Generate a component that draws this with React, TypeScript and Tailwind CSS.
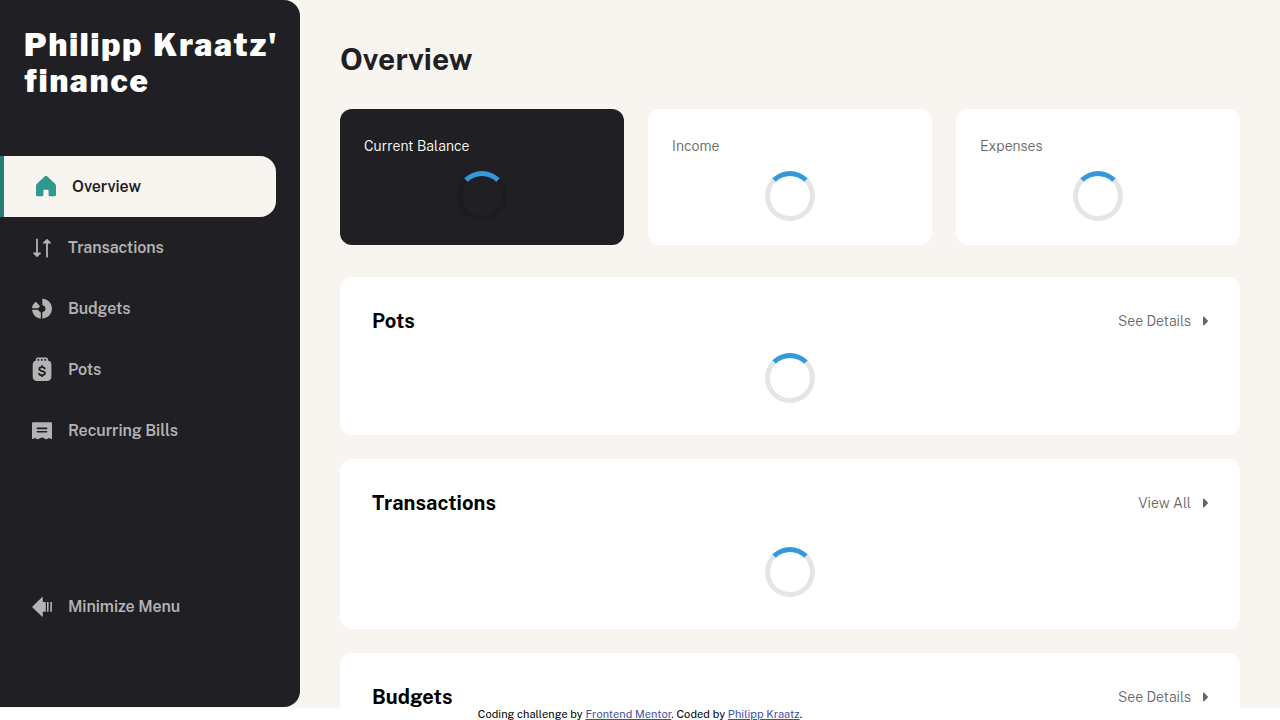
import type { ReactNode } from "react";

function Icon({ children, className }: { children: ReactNode; className?: string }) {
  return (
    <svg viewBox="0 0 24 26" className={`h-[26px] w-6 shrink-0 fill-current ${className ?? ""}`}>
      {children}
    </svg>
  );
}

const icons = {
  overview: (
    <path d="M22 11.9v8.8a1.5 1.5 0 0 1-1.5 1.5H16.1a1.5 1.5 0 0 1-1.5-1.5v-4.1a.75.75 0 0 0-.75-.75h-3.7a.75.75 0 0 0-.75.75v4.1a1.5 1.5 0 0 1-1.5 1.5H3.5A1.5 1.5 0 0 1 2 20.7v-8.8c0-.9.3-1.6 1-2.2l7.6-7.3a2 2 0 0 1 2.8 0l7.6 7.3c.7.6 1 1.3 1 2.2Z" />
  ),
  transactions: (
    <path d="M10.9 18.6 7.6 21.7a.75.75 0 0 1-1.1 0l-3.3-3.1A.75.75 0 0 1 3.7 17.4h2.4V4.3a.9.9 0 0 1 1.8 0v13.1h2.5a.75.75 0 0 1 .5 1.2ZM20.8 7.4l-3.3-3.1a.75.75 0 0 0-1.1 0l-3.3 3.1a.75.75 0 0 0 .5 1.2h2.5v13.1a.9.9 0 0 0 1.8 0V8.6h2.4a.75.75 0 0 0 .5-1.2Z" />
  ),
  budgets: (
    <>
      <path d="M12.3 3.5v5a.8.8 0 0 0 .6.8 3.5 3.5 0 0 1 0 6.8.8.8 0 0 0-.6.8v5a.75.75 0 0 0 .9.7 9.95 9.95 0 0 0 8.8-9.9 9.95 9.95 0 0 0-8.8-9.9.75.75 0 0 0-.9.7Z" />
      <path d="M10.8 16.9v5a.75.75 0 0 1-.9.7A10 10 0 0 1 2.1 14.6a.75.75 0 0 1 .7-.9h4.9a.8.8 0 0 1 .8.6 3.5 3.5 0 0 0 1.7 1.8.8.8 0 0 1 .6.8ZM2.1 11.3a10 10 0 0 1 3-5.1.9.9 0 0 1 1.3 0l3.2 3.5a.75.75 0 0 1 0 1 3.6 3.6 0 0 0-.9 1 .8.8 0 0 1-.7.5H2.8a.75.75 0 0 1-.7-.9Z" />
    </>
  ),
  pots: (
    <>
      <path
        fillRule="evenodd"
        d="M7.5.4h8.8A1.7 1.7 0 0 1 17.9 2v1.6a4.2 4.2 0 0 1 3.5 4.1v12.2a4.2 4.2 0 0 1-4.2 4.2H6.9a4.2 4.2 0 0 1-4.2-4.2V7.7a4.2 4.2 0 0 1 3.2-4.1V2A1.7 1.7 0 0 1 7.5.4Zm.1 1.6v1.7h1.6V2Zm3.4 0v1.7h1.6V2Zm3.4 0v1.7H16V2Z"
      />
      <path
        d="M12 8.3v1.6m0 8.6v1.6M15 12.2c-.3-1.4-1.4-2.1-3-2.1-1.6 0-2.7.7-2.7 1.9 0 2.8 5.7 1.3 5.7 4.1 0 1.3-1.1 2.1-3 2.1-1.8 0-2.9-.8-3.1-2.1"
        className="fill-none stroke-[#201f24] stroke-[1.8]"
      />
    </>
  ),
  bills: (
    <path
      fillRule="evenodd"
      d="M3 4.3h18a1 1 0 0 1 1 1v15.2a.5.5 0 0 1-.8.5L19 19.9l-2.4 1.3a.8.8 0 0 1-.7 0L13.6 20a3 3 0 0 0-3.2 0l-2.3 1.2a.8.8 0 0 1-.7 0L5 19.9 2.8 21a.5.5 0 0 1-.8-.5V5.3a1 1 0 0 1 1-1ZM7.4 9.6a.8.8 0 0 0 0 1.6h9.2a.8.8 0 0 0 0-1.6Zm0 3.4a.8.8 0 0 0 0 1.6h9.2a.8.8 0 0 0 0-1.6Z"
    />
  ),
  minimize: (
    <path d="M12.8 3.6v4.4h3v9.8h-3V22.1a.5.5 0 0 1-.9.4L2.5 13.4a.7.7 0 0 1 0-1l9.4-9.2a.5.5 0 0 1 .9.4Zm4.2 4.4h1.6v9.8H17Zm3.3 0h1.6v9.8h-1.6Z" />
  ),
};

function NavItem({ icon, label, active }: { icon: ReactNode; label: string; active?: boolean }) {
  return (
    <a
      className={`flex h-[61px] w-[276px] items-center gap-3.5 pl-[30px] text-base font-semibold tracking-[-0.09px] ${
        active ? "rounded-r-2xl border-l-4 border-[#277c78] bg-[#f8f4f0] text-[#201f24]" : "text-[#b3b3b3]"
      }`}
    >
      <Icon className={active ? "text-[#2f998f]" : ""}>{icon}</Icon>
      {label}
    </a>
  );
}

function Spinner() {
  return <div className="mx-auto size-[50px] rounded-full border-5 border-black/10 border-t-[#3498db]" />;
}

function StatCard({ label, dark }: { label: string; dark?: boolean }) {
  return (
    <div className={`h-34 rounded-xl px-6 pt-[27px] ${dark ? "bg-[#201f24] text-white" : "bg-white text-[#696868]"}`}>
      <p className="mb-3.5 text-sm leading-[21px] font-light tracking-[0.03px]">{label}</p>
      <Spinner />
    </div>
  );
}

function Section({ title, link, className, gap }: { title: string; link: string; className: string; gap: string }) {
  return (
    <section className={`shrink-0 rounded-xl bg-white px-8 pt-[29px] ${className}`}>
      <div className={`flex h-[30px] items-center justify-between ${gap}`}>
        <h2 className="text-xl font-bold tracking-[0.07px] text-black">{title}</h2>
        <a className="flex items-center gap-3 text-sm font-light text-[#696868]">
          {link}
          <svg viewBox="0 0 5 10" className="h-2.5 w-[5px] fill-current">
            <path d="M0 1C0 .5.5.3.9.6l3.9 4a.5.5 0 0 1 0 .8l-3.9 4C.5 9.7 0 9.5 0 9Z" />
          </svg>
        </a>
      </div>
      <Spinner />
    </section>
  );
}

export default function App() {
  return (
    <div className="relative h-[720px] overflow-hidden bg-white font-['Public_Sans','Libre_Franklin',Inter,sans-serif]">
      <div className="flex h-[708px] overflow-hidden bg-[#f8f4f0]">
        <aside className="flex h-[707px] w-[300px] shrink-0 flex-col rounded-r-2xl bg-[#201f24]">
          <h1 className="h-[156px] pt-[27px] pl-6 font-['Libre_Franklin','Public_Sans',Inter,sans-serif] text-[31px] leading-9 font-black tracking-[1.9px] [word-spacing:2px] whitespace-nowrap text-white">
            Philipp Kraatz'
            <br />
            finance
          </h1>
          <nav>
            <NavItem icon={icons.overview} label="Overview" active />
            <NavItem icon={icons.transactions} label="Transactions" />
            <NavItem icon={icons.budgets} label="Budgets" />
            <NavItem icon={icons.pots} label="Pots" />
            <NavItem icon={icons.bills} label="Recurring Bills" />
          </nav>
          <div className="mt-auto mb-[70px]">
            <NavItem icon={icons.minimize} label="Minimize Menu" />
          </div>
        </aside>
        <main className="flex flex-1 flex-col px-10 pt-[41px]">
          <h2 className="mb-8 text-[30px] leading-9 font-bold tracking-[0.05px] text-[#201f24]">Overview</h2>
          <div className="mb-8 grid shrink-0 grid-cols-3 gap-6">
            <StatCard label="Current Balance" dark />
            <StatCard label="Income" />
            <StatCard label="Expenses" />
          </div>
          <div className="flex flex-col gap-6">
            <Section title="Pots" link="See Details" className="h-[158px]" gap="mb-[17px]" />
            <Section title="Transactions" link="View All" className="h-[170px]" gap="mb-[29px]" />
            <Section title="Budgets" link="See Details" className="h-[170px]" gap="mb-[29px]" />
          </div>
        </main>
      </div>
      <footer className="-mt-px text-center text-[11px] leading-[14px] tracking-[0.06px] text-black">
        Coding challenge by <a className="text-[#3e52a3] underline">Frontend Mentor</a>. Coded by{" "}
        <a className="text-[#3e52a3] underline">Philipp Kraatz</a>.
      </footer>
    </div>
  );
}
